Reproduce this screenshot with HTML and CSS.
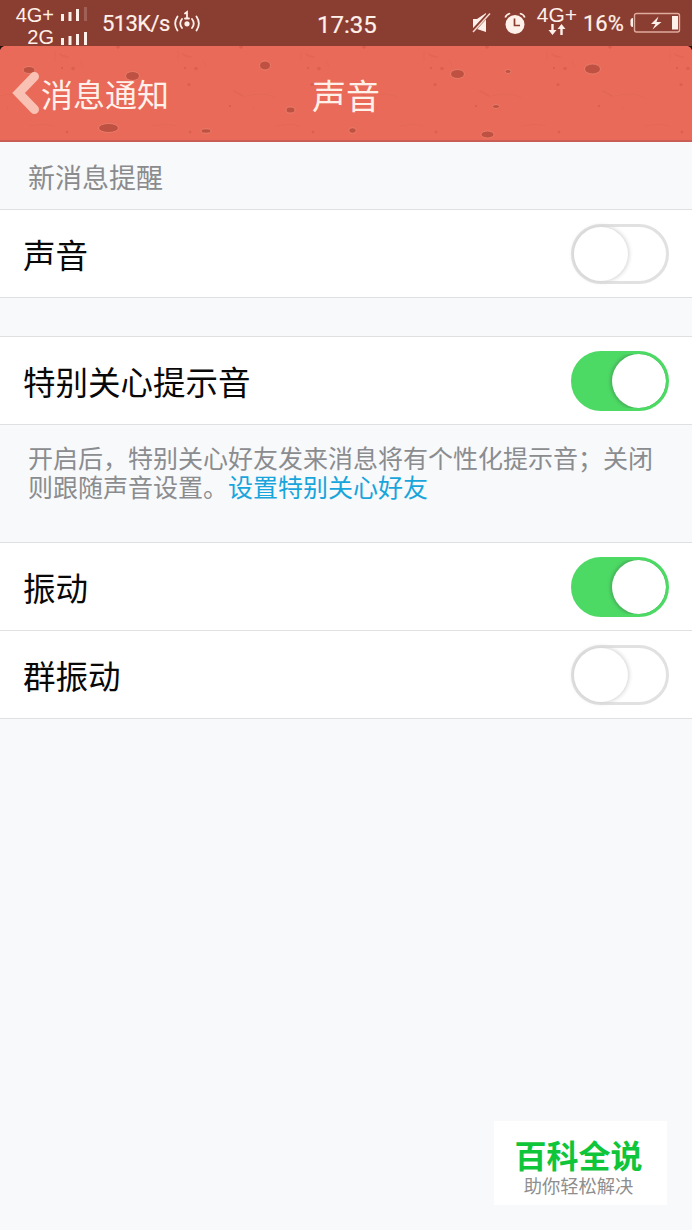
FILE: index.html
```html
<!DOCTYPE html>
<html lang="zh-CN">
<head>
<meta charset="utf-8">
<title>声音</title>
<link rel="stylesheet" href="styles.css">
</head>
<body>
<div class="screen">
  <header class="status">
    <div class="sims">
      <div class="sim"><span>4G+</span>
        <svg width="28" height="16" viewBox="0 0 28 16" fill="#fff0e9"><path d="M1 8h3v7H1zM8.500 6h3v9h-3zM16 3h3v12h-3z"/><path d="M24 1h3v14h-3z" opacity=".2"/></svg>
      </div>
      <div class="sim"><span>2G</span>
        <svg width="28" height="16" viewBox="0 0 28 16" fill="#fff0e9"><path d="M1 8h3v7H1zM8.500 6h3v9h-3zM16 4h3v11h-3zM24 2h3v13h-3z"/></svg>
      </div>
    </div>
    <span class="speed">513K/s</span>
    <svg class="hotspot" width="26" height="24" viewBox="0 0 26 24" fill="none" stroke="#fff0e9" stroke-width="1.800" stroke-linecap="round"><path d="M3.500 6.500Q-1.200 13.500 3.500 20.500M8 9Q4.500 13.500 8 18M22.500 6.500Q27.200 13.500 22.500 20.500M18 9Q21.500 13.500 18 18M11 3.500L13 2V8.500M11 8.500h4"/><circle cx="13" cy="13.800" r="2.600" fill="#fff0e9" stroke="none"/></svg>
    <span class="clock">17:35</span>
    <svg class="mute" width="20" height="22" viewBox="0 0 20 22"><path d="M1 7h4l9-6v19L5 17H1z" fill="#fff0e9"/><path d="M0 20L17.500 1" stroke="#8a3d31" stroke-width="3.600"/><path d="M1 20L18 1.500" stroke="#f5d9ce" stroke-width="1.500"/></svg>
    <svg class="alarm" width="22" height="23" viewBox="0 0 22 23"><circle cx="11" cy="12.500" r="9.500" fill="#fff0e9"/><path d="M1.200 5.500Q2.500 2 6.200 1.500M15.800 1.500Q19.500 2 20.800 5.500" fill="none" stroke="#fff0e9" stroke-width="1.700"/><path d="M10.500 6.500V13.500H16" fill="none" stroke="#8a3d31" stroke-width="1.700"/></svg>
    <div class="data"><span>4G+</span>
      <svg width="18" height="12" viewBox="0 0 18 12" fill="#fff0e9"><path d="M3.300 0h2.400v6H8.500L4.500 11 .5 6h2.800zM12.300 11h2.400V5H17.500L13.500 0 9.500 5h2.800z"/></svg>
    </div>
    <span class="percent">16%</span>
    <svg class="battery" width="51" height="22" viewBox="0 0 51 22"><path d="M3 6v9Q.5 15 .5 12.500v-4Q.5 6 3 6z" fill="#fff0e9"/><rect x="4.500" y="1.500" width="45" height="18.500" rx="2" fill="none" stroke="#dfab9d" stroke-width="1.400"/><path d="M42 4h6v13.500h-6z" fill="#fff0e9"/><path d="M28.500 4.500L21 12h4.500l-3 5.500L31.500 10H26.500z" fill="#fff0e9"/></svg>
  </header>

  <nav class="bar">
    <svg class="texture" width="692" height="96" viewBox="0 0 692 96">
      <defs>
        <pattern id="grain" width="123" height="96" patternUnits="userSpaceOnUse">
          <g fill="none" stroke="#d65d4c" stroke-opacity=".35" stroke-linecap="round">
            <path d="M60 8l3 2 5 1M111 45l9 5" stroke-width="2"/>
            <path d="M55 5v10M80 14l3 7M7 60l1 3M0 50q20-5 30 2M30 80q15-3 24 0" stroke-width=".8"/>
          </g>
          <g fill="#cf5646" fill-opacity=".55"><circle cx="73" cy="22.500" r="1.800"/><circle cx="62" cy="22" r="1.200"/><circle cx="66" cy="38.500" r="1.600"/><circle cx="118" cy="1" r="1.800"/><circle cx="67" cy="86" r="1.400"/><circle cx="107" cy="60" r="1.300"/></g>
        </pattern>
      </defs>
      <rect width="692" height="96" fill="url(#grain)"/>
      <g fill="#bf5142" stroke="#ee8471" stroke-width=".8">
        <ellipse cx="29" cy="24" rx="6" ry="3.500"/><ellipse cx="132.500" cy="30" rx="7" ry="4.500"/><ellipse cx="108.500" cy="82" rx="10" ry="4.500"/><ellipse cx="206" cy="85" rx="5" ry="2.200"/><ellipse cx="265" cy="19.500" rx="5.500" ry="4.500"/><ellipse cx="290.500" cy="64" rx="4.500" ry="3"/><ellipse cx="352.500" cy="84.500" rx="3.700" ry="2.800"/><ellipse cx="457.500" cy="28" rx="7" ry="4.500"/><ellipse cx="508" cy="25.500" rx="3" ry="2"/><ellipse cx="592.500" cy="23" rx="8" ry="5"/><ellipse cx="496" cy="60.500" rx="3.500" ry="2"/><ellipse cx="487.500" cy="88.500" rx="6.500" ry="3.500"/>
      </g>
      <path d="M0 0h4Q1 1 0 4zM692 0h-4q3 1 4 4z" fill="#26100c"/>
    </svg>
    <div class="back">
      <svg width="30" height="46" viewBox="0 0 30 46"><path d="M23.500 6.500L7.500 23l16 16.500" fill="none" stroke="#f9c1b4" stroke-width="9" stroke-linecap="round" stroke-linejoin="miter"/></svg>
      <span>消息通知</span>
    </div>
    <h1 class="title">声音</h1>
  </nav>

  <main>
    <h2 class="label">新消息提醒</h2>
    <section class="group">
      <div class="row"><span>声音</span><i class="switch"></i></div>
    </section>
    <section class="group spaced">
      <div class="row"><span>特别关心提示音</span><i class="switch on"></i></div>
    </section>
    <p class="note">开启后，特别关心好友发来消息将有个性化提示音；关闭<br>则跟随声音设置。<a>设置特别关心好友</a></p>
    <section class="group">
      <div class="row"><span>振动</span><i class="switch on"></i></div>
      <div class="row"><span>群振动</span><i class="switch"></i></div>
    </section>
  </main>

  <aside class="brand"><strong>百科全说</strong><span>助你轻松解决</span></aside>
</div>
</body>
</html>
```
FILE: styles.css
```css
* { box-sizing: border-box; }
body { margin: 0; font-family: "Noto Sans CJK SC", sans-serif; }
svg { display: block; flex: none; }
.screen { position: relative; width: 692px; height: 1230px; background: #f7f9fb; overflow: hidden; }

.status { display: flex; align-items: flex-start; height: 46px; background: #8a3d31; color: #fff0e9; font-family: Roboto, sans-serif; white-space: nowrap; }
.sims { width: 88px; padding-top: 4px; }
.sim { display: flex; justify-content: flex-end; align-items: flex-start; gap: 6px; height: 22px; font: 20px/22px "Liberation Sans", sans-serif; }
.sim svg { margin-top: 3px; }
.sim:first-child svg { margin-top: 2px; }
.sim + .sim svg { margin-top: 4px; }
.speed { width: 72px; margin-left: 14px; padding-top: 9px; font-size: 22px; line-height: 30px; letter-spacing: -0.600px; -webkit-text-stroke: 0.200px; }
.hotspot { margin: 10px 0 0 0; }
.clock { width: 70px; margin-left: 117px; padding-top: 9px; font-size: 24px; line-height: 32px; -webkit-text-stroke: 0.200px; }
.mute { margin: 12px 0 0 85px; }
.alarm { margin: 12px 0 0 12px; }
.data { display: flex; flex-direction: column; align-items: center; width: 42px; margin-left: 10px; padding-top: 5px; font: 21px/19px "Liberation Sans", sans-serif; }
.percent { width: 44px; margin-left: 5px; padding-top: 9px; font-size: 22px; line-height: 30px; -webkit-text-stroke: 0.200px; }
.battery { margin: 12px 0 0 3px; }

.bar { position: relative; display: grid; grid-template-columns: 1fr 72px 1fr; align-items: center; height: 96px; background: #e96a58; color: #fff1ea; border-bottom: 2px solid #c95e57; }
.texture { position: absolute; top: 0; left: 0; }
.back { position: relative; display: flex; align-items: center; padding-left: 11px; font-size: 32px; line-height: 46px; }
.title { position: relative; margin: 3px 0 0; font-size: 34px; line-height: 46px; font-weight: 400; text-align: center; }

.label { margin: 0; height: 67px; padding: 15px 28px 0; font-size: 27px; line-height: 40px; font-weight: 400; color: #8b8b8d; }
.group { border-top: 1px solid #dfe0e2; background: #fff; }
.spaced { margin-top: 38px; }
.row { display: flex; align-items: center; justify-content: space-between; height: 88px; padding: 0 23px; border-bottom: 1px solid #dfe0e2; font-size: 32.500px; line-height: 46px; color: #080808; }
.switch { position: relative; width: 98px; height: 60px; border: 3px solid #e1e1e2; border-radius: 30px; background: #fff; }
.switch::after { content: ""; position: absolute; top: 0; left: 0; width: 54px; height: 54px; border-radius: 50%; background: #fff; box-shadow: 0 0 4px 1px #d2d2d3; }
.switch.on { border-color: #4cd964; background: #4cd964; overflow: hidden; }
.switch.on::after { left: 38px; box-shadow: 0 0 3px 2px #48b25b; }
.note { margin: 0; height: 117px; padding: 18px 28px 0; font-size: 25px; line-height: 29px; color: #8b8c8f; white-space: nowrap; }
.note a { color: #18a5dc; }

.brand { position: absolute; left: 494px; top: 1121px; width: 173px; height: 84px; padding: 13px 4px 0 0; display: flex; flex-direction: column; align-items: center; background: #fff; color: #8e8e8e; font-size: 18.300px; line-height: 22px; }
.brand strong { color: #0fc53a; font-size: 32px; line-height: 40px; font-weight: 700; }
```
